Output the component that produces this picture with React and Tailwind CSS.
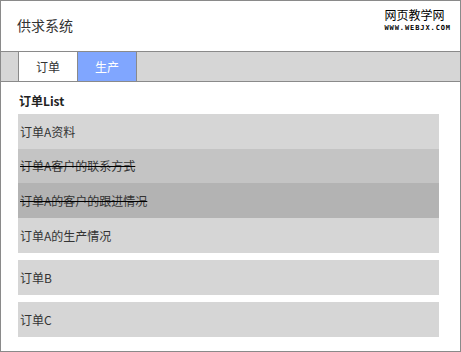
export default function App() {
  const font = { fontFamily: '"Noto Sans CJK SC", "Noto Sans", sans-serif' };
  return (
    <div className="w-[461px] h-[352px] bg-white">
      <div
        className="w-[461px] h-[352px] border border-[#8a8a8a] box-border flex flex-col text-[#333]"
        style={font}
      >
        <div className="h-[50px] flex items-start justify-between pl-[16px] pr-[9px]">
          <div className="text-[14px] leading-[16px] mt-[16px]">供求系统</div>
          <div className="flex flex-col items-start mt-[7px]">
            <div className="text-[12px] leading-[14px] text-black tracking-[0px] ml-[0px]">网页教学网</div>
            <div
              className="text-[7px] leading-[7px] font-bold text-black tracking-[0.9px] mt-[3px]"
              style={{ fontFamily: '"DejaVu Sans Mono", monospace' }}
            >
              WWW.WEBJX.COM
            </div>
          </div>
        </div>
        <div className="h-[31px] border-y border-[#8a8a8a] bg-[#d6d6d6] flex pl-[17px]">
          <div className="flex border-l border-[#8a8a8a]">
            <div className="w-[59px] bg-white border-r border-[#8a8a8a] flex items-center justify-center text-[12px]">
              订单
            </div>
            <div className="w-[59px] bg-[#80a6ff] border-r border-[#8a8a8a] flex items-center justify-center text-[12px] text-white">
              生产
            </div>
          </div>
        </div>
        <div className="flex flex-col pl-[17px] pr-[21px] pt-[11px]">
          <div className="text-[12px] font-bold leading-[16px] h-[21px] pl-[1px] text-[#222]">订单List</div>
          <div className="flex flex-col text-[12px]">
            <div className="h-[35px] bg-[#d6d6d6] flex items-center pl-[2px]">订单A资料</div>
            <div className="h-[34px] bg-[#c4c4c4] flex items-center pl-[2px]">
              <span className="line-through decoration-black">订单A客户的联系方式</span>
            </div>
            <div className="h-[35px] bg-[#b3b3b3] flex items-center pl-[2px]">
              <span className="line-through decoration-black">订单A的客户的跟进情况</span>
            </div>
            <div className="h-[35px] bg-[#d6d6d6] flex items-center pl-[2px]">订单A的生产情况</div>
            <div className="h-[35px] bg-[#d6d6d6] flex items-center pl-[2px] mt-[7px]">订单B</div>
            <div className="h-[35px] bg-[#d6d6d6] flex items-center pl-[2px] mt-[7px]">订单C</div>
          </div>
        </div>
      </div>
    </div>
  );
}
